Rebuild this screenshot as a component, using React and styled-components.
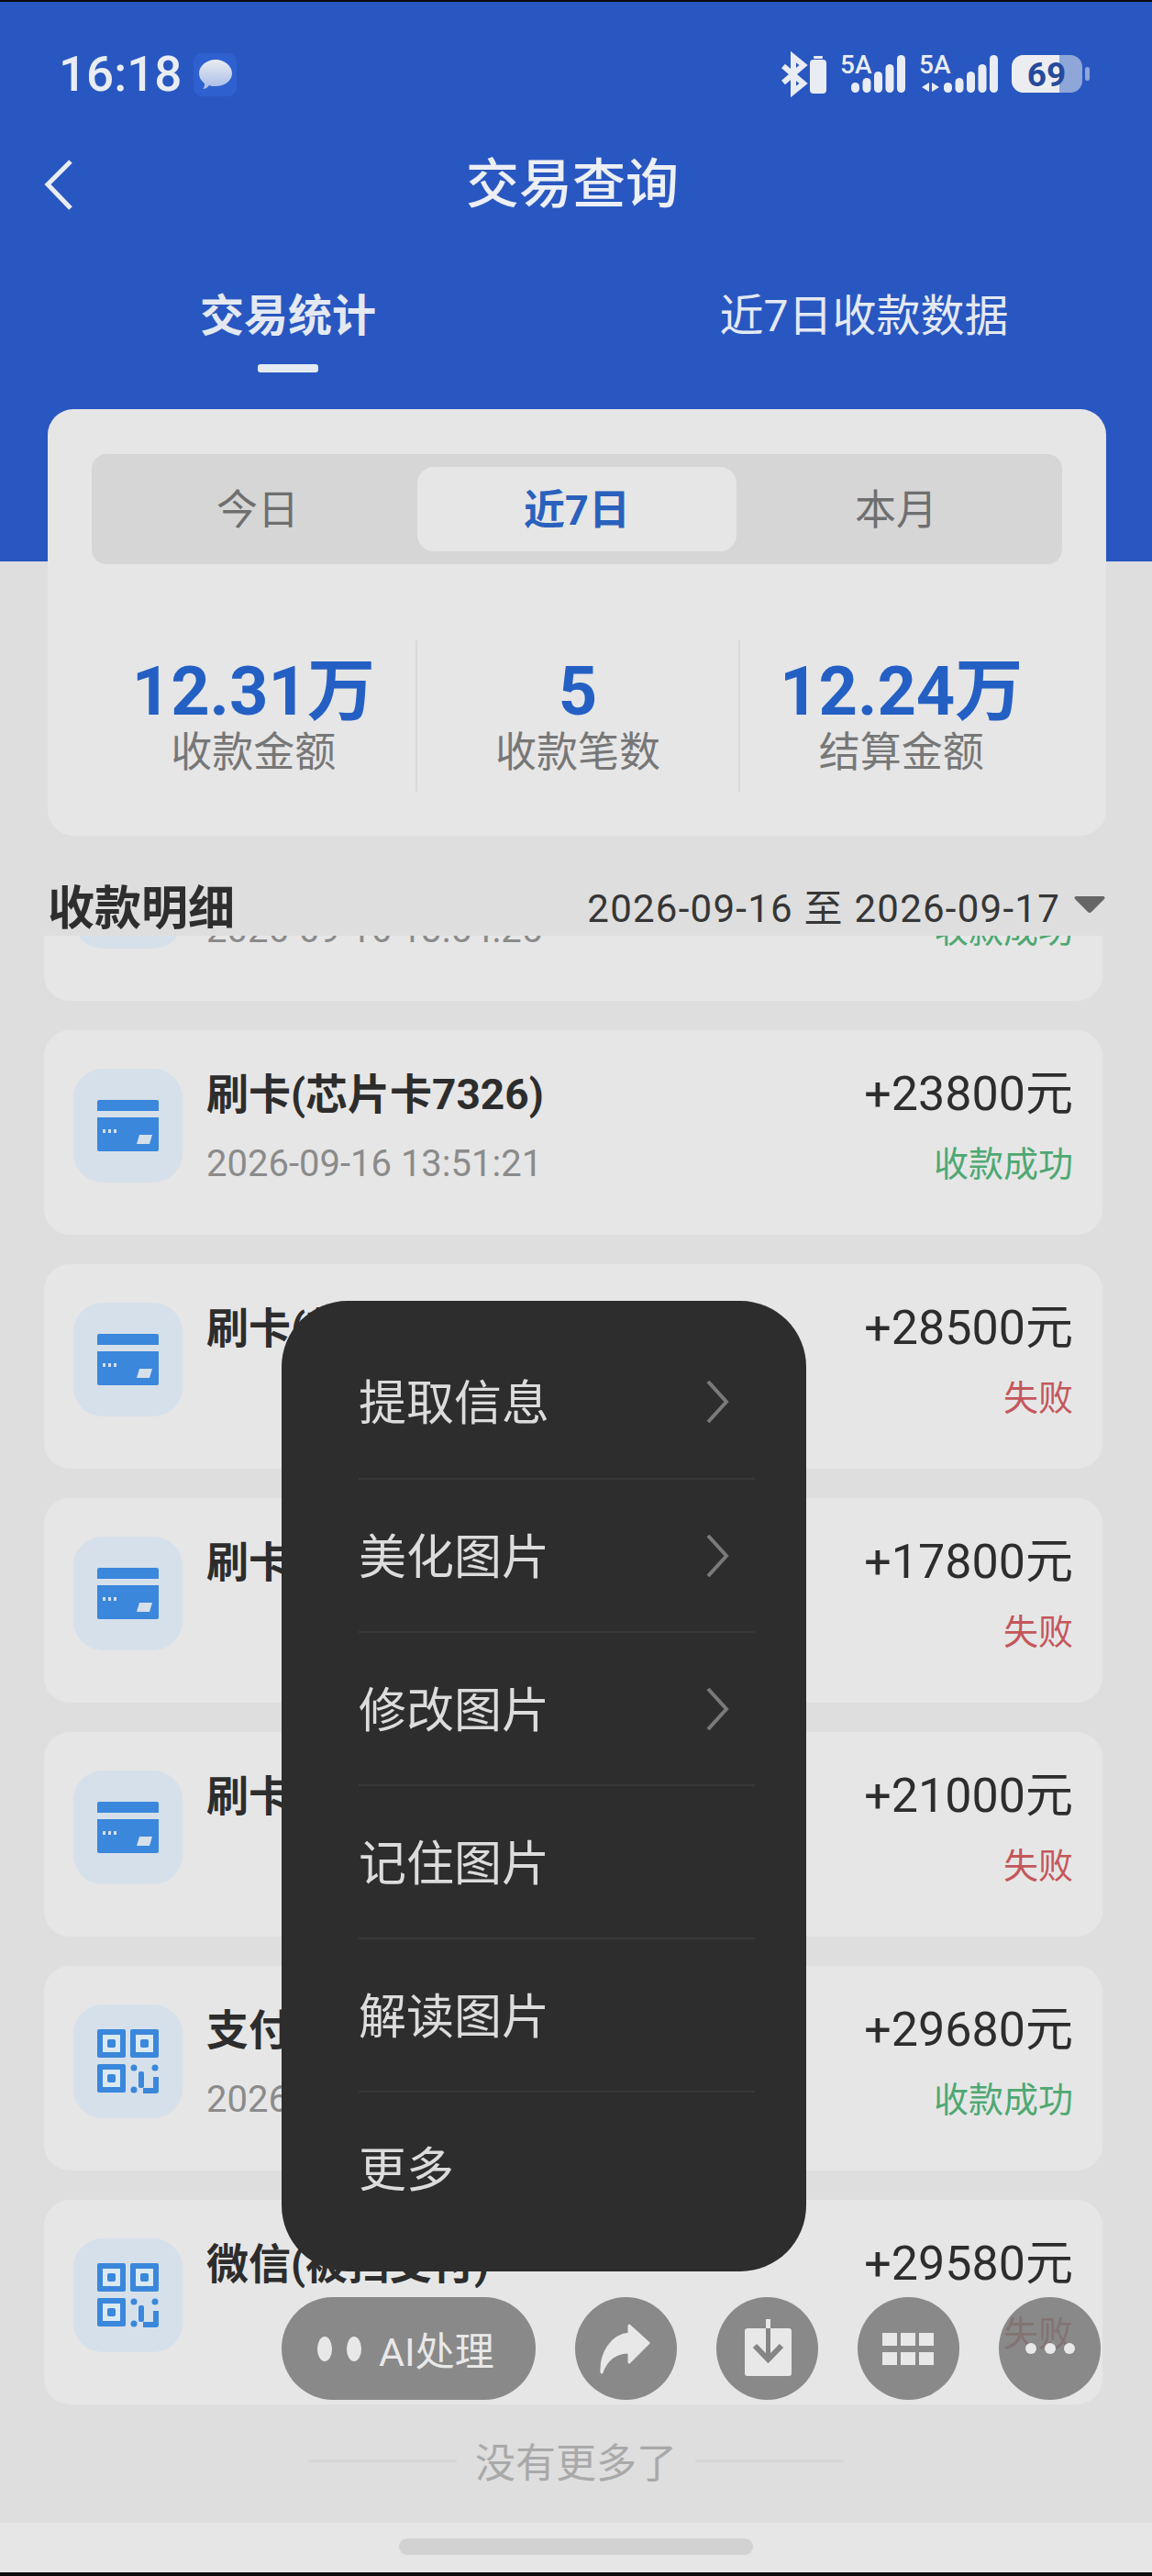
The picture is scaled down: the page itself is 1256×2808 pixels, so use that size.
import React from "react";
import styled, { createGlobalStyle } from "styled-components";

const GlobalStyle = createGlobalStyle`
  html, body {
    margin: 0;
    padding: 0;
    background: #000;
  }
  * {
    box-sizing: border-box;
  }
`;

const Phone = styled.div`
  position: relative;
  width: 1256px;
  height: 2808px;
  display: flex;
  flex-direction: column;
  overflow: hidden;
  border-top: 2px solid #0b0b0b;
  border-bottom: 4px solid #0b0b0b;
  background: #dedede;
  font-family: Roboto, "Noto Sans CJK SC", sans-serif;
`;

// blue top part
const Hero = styled.header`
  flex: none;
  height: 610px;
  padding-top: 54px;
  background: #2957c1;
  color: #e9edf3;
`;

const StatusBar = styled.div`
  display: flex;
  align-items: center;
  justify-content: space-between;
  height: 50px;
  padding: 0 68px 0 64px;
`;

const StatusLeft = styled.div`
  display: flex;
  align-items: center;
  gap: 13px;
`;

const Time = styled.span`
  font-size: 53px;
  font-weight: 500;
  line-height: 50px;
  color: #e9edf3;
`;

const StatusRight = styled.div`
  display: flex;
  align-items: center;
  gap: 15px;
  svg {
    overflow: visible;
  }
`;

const NavBar = styled.div`
  position: relative;
  display: flex;
  align-items: center;
  justify-content: center;
  height: 70px;
  margin-top: 60px;
  padding-right: 8px;
`;

const BackIcon = styled.svg`
  position: absolute;
  left: 48px;
  top: 8px;
`;

const Title = styled.h1`
  margin: 0;
  font-size: 58px;
  font-weight: 500;
  line-height: 70px;
  color: #eceff4;
`;

const Tabs = styled.div`
  display: grid;
  grid-template-columns: 1fr 1fr;
  margin-top: 77px;
`;

const Tab = styled.div`
  position: relative;
  text-align: center;
  font-size: 48px;
  line-height: 64px;
  font-weight: ${(p) => (p.$active ? 700 : 400)};
  color: #e4e9f1;
  ${(p) =>
    p.$active &&
    `
    &::after {
      content: "";
      position: absolute;
      left: 50%;
      top: 84px;
      width: 66px;
      height: 9px;
      margin-left: -33px;
      border-radius: 3px;
      background: #e4ebf2;
    }
  `}
`;

const SummaryCard = styled.section`
  position: relative;
  flex: none;
  height: 465px;
  margin: -166px 50px 0 52px;
  padding: 49px 48px 0;
  border-radius: 28px;
  background: #e6e6e6;
`;

const Segment = styled.div`
  display: grid;
  grid-template-columns: repeat(3, 1fr);
  height: 120px;
  padding: 14px 7px;
  border-radius: 16px;
  background: #d6d6d6;
`;

const SegmentItem = styled.div`
  display: flex;
  align-items: center;
  justify-content: center;
  padding-bottom: 6px;
  border-radius: 18px;
  font-size: 45px;
  font-weight: ${(p) => (p.$active ? 700 : 400)};
  color: ${(p) => (p.$active ? "#2a61bd" : "#6f6f6f")};
  background: ${(p) => (p.$active ? "#e6e6e6" : "transparent")};
`;

const Stats = styled.div`
  display: grid;
  grid-template-columns: repeat(3, 1fr);
  margin-top: 83px;
`;

const Stat = styled.div`
  display: flex;
  flex-direction: column;
  align-items: center;
  justify-content: center;
  height: 165px;
  padding-top: 4px;
  & + & {
    border-left: 2px solid #d9d9d9;
  }
`;

const StatValue = styled.div`
  font-size: 74px;
  font-weight: 700;
  line-height: 76px;
  color: #2460c4;
`;

const StatLabel = styled.div`
  font-size: 45px;
  line-height: 58px;
  color: #777;
`;

const SectionHead = styled.div`
  flex: none;
  display: flex;
  justify-content: space-between;
  height: 109px;
  padding: 49px 50px 0 52px;
  position: relative;
  z-index: 1;
`;

const SectionTitle = styled.h2`
  margin: 0;
  font-size: 51px;
  font-weight: 700;
  line-height: 62px;
  color: #2e2e2e;
`;

const DateRange = styled.div`
  display: flex;
  align-items: center;
  gap: 14px;
  height: 62px;
  margin-top: -5px;
  font-size: 42px;
  letter-spacing: 1.25px;
  color: #363636;
`;

const ListViewport = styled.div`
  flex: 1;
  min-height: 0;
  overflow: hidden;
`;

const List = styled.div`
  display: flex;
  flex-direction: column;
  gap: 32px;
  margin-top: -152px;
  padding: 0 54px 0 48px;
`;

const Card = styled.article`
  display: flex;
  align-items: flex-start;
  height: 223px;
  padding: 40px 32px 0;
  border-radius: 28px;
  background: #e6e6e6;
`;

const IconBox = styled.div`
  flex: none;
  display: flex;
  align-items: center;
  justify-content: center;
  width: 119px;
  height: 124px;
  margin: 2px 26px 0 0;
  border-radius: 32px;
  background: #d6e0ea;
`;

const CardBody = styled.div`
  flex: 1;
  min-width: 0;
`;

const CardTitle = styled.div`
  font-size: 46px;
  font-weight: 700;
  line-height: 60px;
  color: #2d2d2d;
`;

const CardDate = styled.div`
  margin-top: 21px;
  font-size: 40px;
  line-height: 50px;
  color: #8b8b8b;
`;

const CardSide = styled.div`
  flex: none;
  text-align: right;
`;

const Amount = styled.div`
  font-size: 52px;
  line-height: 60px;
  color: #2d2d2d;
`;

const Status = styled.div`
  margin-top: 21px;
  font-size: 38px;
  line-height: 50px;
  color: ${(p) => (p.$ok ? "#4fa872" : "#c4575b")};
`;

const EndNote = styled.div`
  display: flex;
  align-items: center;
  justify-content: center;
  gap: 20px;
  height: 62px;
  margin-top: 30px;
  font-size: 44px;
  color: #a9a9a9;
  &::before,
  &::after {
    content: "";
    width: 162px;
    height: 3px;
    background: #d6d6d6;
  }
`;

const HomeBar = styled.div`
  flex: none;
  display: flex;
  justify-content: center;
  height: 54px;
  padding-top: 17px;
  background: #e6e6e6;
  &::after {
    content: "";
    width: 386px;
    height: 18px;
    border-radius: 9px;
    background: #d2d2d2;
  }
`;

// popup menu over the list
const Menu = styled.nav`
  position: absolute;
  left: 307px;
  top: 1416px;
  width: 572px;
  height: 1058px;
  padding: 26px 56px 0 84px;
  border-radius: 72px;
  background: #2d2d2d;
`;

const MenuItem = styled.div`
  display: flex;
  align-items: center;
  justify-content: space-between;
  height: 167px;
  padding: 0 28px 5px 0;
  font-size: 52px;
  color: #dcdcdc;
  & + & {
    border-top: 2px solid #383838;
  }
  svg {
    margin-top: 6px;
  }
`;

const Toolbar = styled.div`
  position: absolute;
  left: 307px;
  top: 2502px;
  display: flex;
  gap: 43px;
`;

const RoundButton = styled.div`
  display: flex;
  align-items: center;
  justify-content: center;
  width: 111px;
  height: 112px;
  border-radius: 50%;
  background: rgba(120, 120, 120, 0.85);
`;

const PillButton = styled.div`
  display: flex;
  align-items: center;
  width: 277px;
  height: 112px;
  padding-left: 39px;
  border-radius: 56px;
  background: rgba(120, 120, 120, 0.85);
  font-size: 43px;
  color: #e8e8e8;
`;

const Dot = styled.span`
  width: 16px;
  height: 27px;
  margin-right: ${(p) => (p.$last ? 19 : 16)}px;
  border-radius: 50%;
  background: #e8e8e8;
`;

function Bluetooth() {
  return (
    <svg width="50" height="42" viewBox="0 0 50 42">
      <path
        d="M3 12 L25 31 L14 40 V2 L25 11 L3 30"
        fill="none"
        stroke="#e9edf3"
        strokeWidth="6"
      />
      <rect x="32" y="5" width="18" height="37" rx="4" fill="#e9edf3" />
      <rect x="36" y="1" width="10" height="3" rx="1" fill="#e9edf3" />
    </svg>
  );
}

function Signal({ arrows }) {
  const tops = [30, 25, 18, 10, 0];
  const left = arrows ? 27 : 12;
  return (
    <svg width={left + 59} height="42" viewBox={`0 0 ${left + 59} 42`}>
      <text x="0" y="20" fontFamily="Roboto" fontWeight="500" fontSize="28" fill="#e9edf3">
        5A
      </text>
      {arrows && (
        <path d="M3 35 L11 30 V40 Z M14 30 L22 35 L14 40 Z" fill="#e9edf3" />
      )}
      {tops.map((top, i) => (
        <rect
          key={i}
          x={left + i * 12.5}
          y={top}
          width="9"
          height={41 - top}
          rx="4.5"
          fill="#e9edf3"
        />
      ))}
    </svg>
  );
}

function Battery() {
  return (
    <svg width="85" height="42" viewBox="0 0 85 42">
      <rect x="0" y="0" width="77" height="41" rx="13" fill="#8ea6d8" />
      <path d="M13 0 H52 V41 H13 A13 13 0 0 1 0 28 V13 A13 13 0 0 1 13 0 Z" fill="#ecedf0" />
      <rect x="80" y="13" width="5" height="15" rx="2.500" fill="#8ea6d8" />
      <text x="38" y="34" textAnchor="middle" fontFamily="Roboto" fontWeight="700" fontSize="37" fill="#264a9c">
        69
      </text>
    </svg>
  );
}

function MessageIcon() {
  return (
    <svg width="47" height="47" viewBox="0 0 47 47">
      <defs>
        <linearGradient id="bubble" x1="0" y1="0" x2="0" y2="1">
          <stop offset="0" stopColor="#e9ecf1" />
          <stop offset="1" stopColor="#a6bbe6" />
        </linearGradient>
      </defs>
      <rect width="47" height="47" rx="9" fill="#2e60cf" />
      <path
        d="M24 7 C34 7 42 14 42 22 C42 30 34 36 24 36 C21 36 19 36 17 35 C15 38 12 39 10 39 C12 37 12 35 12 33 C8 30 6 26 6 22 C6 14 14 7 24 7 Z"
        fill="url(#bubble)"
      />
    </svg>
  );
}

function CardIcon() {
  return (
    <svg width="67" height="56" viewBox="0 0 67 56">
      <path d="M2 0 H65 A2 2 0 0 1 67 2 V12 H0 V2 A2 2 0 0 1 2 0 Z" fill="#3a87dc" />
      <path d="M0 19 H67 V54 A2 2 0 0 1 65 56 H2 A2 2 0 0 1 0 54 Z" fill="#3a87dc" />
      <rect x="6" y="32" width="3" height="4" fill="#d6e0ea" />
      <rect x="12" y="32" width="3" height="4" fill="#d6e0ea" />
      <rect x="18" y="32" width="3" height="4" fill="#d6e0ea" />
      <path d="M46 38 H60 L57 48 H43 Z" fill="#d6e0ea" />
    </svg>
  );
}

function QrIcon() {
  const finder = (x, y) => (
    <g key={`${x}-${y}`}>
      <rect x={x} y={y} width="31" height="31" rx="2" fill="#3a87dc" />
      <rect x={x + 6} y={y + 6} width="19" height="19" fill="#dbe9f3" />
      <rect x={x + 11} y={y + 11} width="9" height="9" rx="2" fill="#3a87dc" />
    </g>
  );
  return (
    <svg width="67" height="70" viewBox="0 0 67 70">
      {finder(0, 0)}
      {finder(36, 0)}
      {finder(0, 38)}
      <circle cx="40" cy="42" r="3.5" fill="#3a87dc" />
      <circle cx="63" cy="42" r="3.5" fill="#3a87dc" />
      <rect x="45" y="46" width="6" height="18" rx="2" fill="#3a87dc" />
      <circle cx="40" cy="66" r="3.5" fill="#3a87dc" />
      <path d="M50 70 H64 A3 3 0 0 0 67 67 V52 H61 V64 H50 Z" fill="#3a87dc" />
    </svg>
  );
}

function Chevron() {
  return (
    <svg width="26" height="46" viewBox="0 0 26 46">
      <polyline points="3,1 23,23 3,45" fill="none" stroke="#7a7a7a" strokeWidth="4" />
    </svg>
  );
}

const cards = [
  { icon: "card", title: "刷卡(芯片卡7326)", date: "2026-09-16 13:54:25", amount: "+24600元", ok: true },
  { icon: "card", title: "刷卡(芯片卡7326)", date: "2026-09-16 13:51:21", amount: "+23800元", ok: true },
  { icon: "card", title: "刷卡(芯片卡7326)", amount: "+28500元" },
  { icon: "card", title: "刷卡(芯片卡7326)", amount: "+17800元" },
  { icon: "card", title: "刷卡(芯片卡7326)", amount: "+21000元" },
  { icon: "qr", title: "支付宝(被扫支付)", date: "2026-09-16 13:40:12", amount: "+29680元", ok: true },
  { icon: "qr", title: "微信(被扫支付)", amount: "+29580元" },
];

const menuItems = [
  { label: "提取信息", more: true },
  { label: "美化图片", more: true },
  { label: "修改图片", more: true },
  { label: "记住图片" },
  { label: "解读图片" },
  { label: "更多" },
];

export default function App() {
  return (
    <>
      <GlobalStyle />
      <Phone>
        <Hero>
          <StatusBar>
            <StatusLeft>
              <Time>16:18</Time>
              <MessageIcon />
            </StatusLeft>
            <StatusRight>
              <Bluetooth />
              <Signal />
              <Signal arrows />
              <Battery />
            </StatusRight>
          </StatusBar>
          <NavBar>
            <BackIcon width="32" height="55" viewBox="0 0 32 55">
              <polyline points="29,2 4,27 29,53" fill="none" stroke="#e9edf3" strokeWidth="5" />
            </BackIcon>
            <Title>交易查询</Title>
          </NavBar>
          <Tabs>
            <Tab $active>交易统计</Tab>
            <Tab>近7日收款数据</Tab>
          </Tabs>
        </Hero>

        <SummaryCard>
          <Segment>
            <SegmentItem>今日</SegmentItem>
            <SegmentItem $active>近7日</SegmentItem>
            <SegmentItem>本月</SegmentItem>
          </Segment>
          <Stats>
            <Stat>
              <StatValue>12.31万</StatValue>
              <StatLabel>收款金额</StatLabel>
            </Stat>
            <Stat>
              <StatValue>5</StatValue>
              <StatLabel>收款笔数</StatLabel>
            </Stat>
            <Stat>
              <StatValue>12.24万</StatValue>
              <StatLabel>结算金额</StatLabel>
            </Stat>
          </Stats>
        </SummaryCard>

        <SectionHead>
          <SectionTitle>收款明细</SectionTitle>
          <DateRange>
            2026-09-16 至 2026-09-17
            <svg width="36" height="20" viewBox="0 0 36 20">
              <path d="M3 1 H33 A2 2 0 0 1 34 4 L20 18 A3 3 0 0 1 16 18 L2 4 A2 2 0 0 1 3 1 Z" fill="#666" />
            </svg>
          </DateRange>
        </SectionHead>

        <ListViewport>
          <List>
            {cards.map((card, i) => (
              <Card key={i}>
                <IconBox>{card.icon === "qr" ? <QrIcon /> : <CardIcon />}</IconBox>
                <CardBody>
                  <CardTitle>{card.title}</CardTitle>
                  {card.date && <CardDate>{card.date}</CardDate>}
                </CardBody>
                <CardSide>
                  <Amount>{card.amount}</Amount>
                  <Status $ok={card.ok}>{card.ok ? "收款成功" : "失败"}</Status>
                </CardSide>
              </Card>
            ))}
          </List>
          <EndNote>没有更多了</EndNote>
        </ListViewport>

        <HomeBar />

        <Menu>
          {menuItems.map((item) => (
            <MenuItem key={item.label}>
              {item.label}
              {item.more && <Chevron />}
            </MenuItem>
          ))}
        </Menu>

        <Toolbar>
          <PillButton>
            <Dot />
            <Dot $last />
            AI处理
          </PillButton>
          <RoundButton>
            <svg width="111" height="112" viewBox="0 0 111 112">
              <path
                d="M59 31 L80 50 L59 71 V60 C44 60 34 68 29 82 C28 62 39 42 59 40 Z"
                fill="#e8e8e8"
                stroke="#e8e8e8"
                strokeWidth="3"
                strokeLinejoin="round"
              />
            </svg>
          </RoundButton>
          <RoundButton>
            <svg width="111" height="112" viewBox="0 0 111 112">
              <rect x="31" y="34" width="51" height="52" rx="3" fill="#e8e8e8" />
              <rect x="54" y="24" width="5" height="10" fill="#e8e8e8" />
              <rect x="54" y="34" width="5" height="32" fill="#858585" />
              <polyline points="42,53 56.500,68 71,53" fill="none" stroke="#858585" strokeWidth="6" />
            </svg>
          </RoundButton>
          <RoundButton>
            <svg width="111" height="112" viewBox="0 0 111 112">
              {[27, 47, 67].map((x) =>
                [39, 60].map((y) => (
                  <rect key={`${x}-${y}`} x={x} y={y} width="16" height="14" fill="#e8e8e8" />
                ))
              )}
            </svg>
          </RoundButton>
          <RoundButton>
            <svg width="111" height="112" viewBox="0 0 111 112">
              {[35, 56, 77].map((cx) => (
                <circle key={cx} cx={cx} cy="56" r="6" fill="#e8e8e8" />
              ))}
            </svg>
          </RoundButton>
        </Toolbar>
      </Phone>
    </>
  );
}
